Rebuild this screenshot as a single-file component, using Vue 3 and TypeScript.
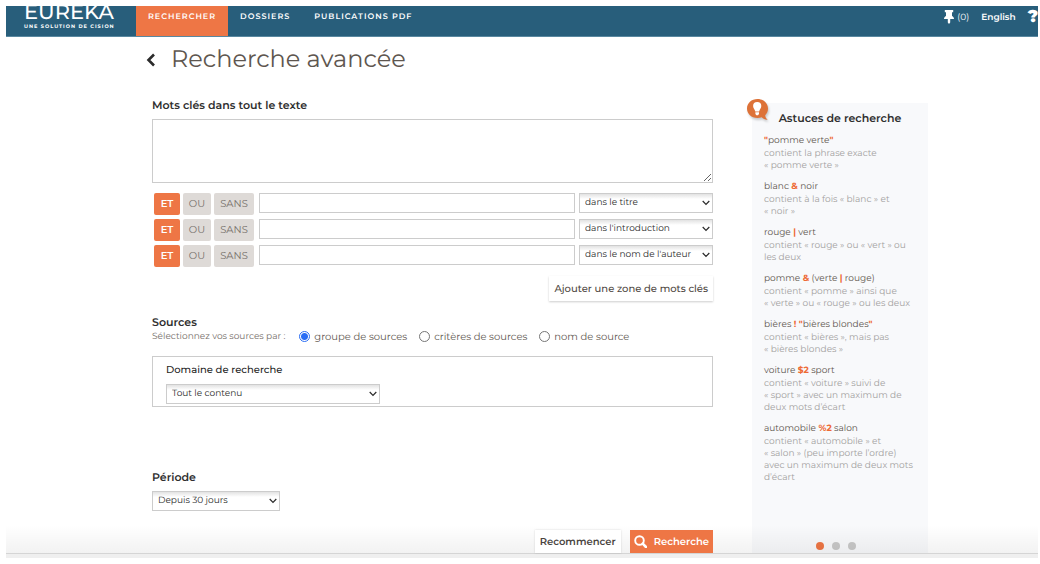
<script setup lang="ts">
import { ref } from 'vue'

type Operator = 'ET' | 'OU' | 'SANS'
interface KeywordRow { id: number; operator: Operator; text: string; field: string }
interface Part { text: string; mark?: boolean }
interface Tip { example: Part[]; lines: string[] }

const operators: Operator[] = ['ET', 'OU', 'SANS']
const fields = ['dans le titre', "dans l'introduction", "dans le nom de l'auteur"]
const rows = ref<KeywordRow[]>(
  fields.map((field, i) => ({ id: i + 1, operator: 'ET' as Operator, text: '', field }))
)
const keywords = ref('')
const sourceModes = ['groupe de sources', 'critères de sources', 'nom de source']
const sourceMode = ref(sourceModes[0])
const domain = ref('Tout le contenu')
const period = ref('Depuis 30 jours')
const tipPage = ref(1)

const tips: Tip[] = [
  { example: [{ text: '"', mark: true }, { text: 'pomme verte' }, { text: '"', mark: true }],
    lines: ['contient la phrase exacte', '« pomme verte »'] },
  { example: [{ text: 'blanc ' }, { text: '&', mark: true }, { text: ' noir' }],
    lines: ['contient à la fois « blanc » et', '« noir »'] },
  { example: [{ text: 'rouge ' }, { text: '|', mark: true }, { text: ' vert' }],
    lines: ['contient « rouge » ou « vert » ou', 'les deux'] },
  { example: [{ text: 'pomme ' }, { text: '&', mark: true }, { text: ' (verte ' }, { text: '|', mark: true }, { text: ' rouge)' }],
    lines: ['contient « pomme » ainsi que', '« verte » ou « rouge » ou les deux'] },
  { example: [{ text: 'bières ' }, { text: '! "', mark: true }, { text: 'bières blondes' }, { text: '"', mark: true }],
    lines: ['contient « bières », mais pas', '« bières blondes »'] },
  { example: [{ text: 'voiture ' }, { text: '$2', mark: true }, { text: ' sport' }],
    lines: ['contient « voiture » suivi de', '« sport » avec un maximum de', 'deux mots d’écart'] },
  { example: [{ text: 'automobile ' }, { text: '%2', mark: true }, { text: ' salon' }],
    lines: ['contient « automobile » et', '« salon » (peu importe l’ordre)', 'avec un maximum de deux mots', 'd’écart'] }
]

function addRow() {
  rows.value.push({ id: rows.value.length + 1, operator: 'ET', text: '', field: fields[0] })
}
</script>

<template>
  <div class="page">
    <header class="topbar">
      <a class="logo" href="#">
        <span class="logo-name">EUREKA</span>
        <span class="logo-tag">UNE SOLUTION DE CISION</span>
      </a>
      <nav class="nav">
        <a class="nav-item active" href="#">RECHERCHER</a>
        <a class="nav-item" href="#">DOSSIERS</a>
        <a class="nav-item" href="#">PUBLICATIONS PDF</a>
      </nav>
      <div class="tools">
        <a class="pins" href="#" aria-label="Documents épinglés">
          <svg width="10" height="14" viewBox="0 0 10 14" aria-hidden="true">
            <path d="M.8 0h8.400v2.200H8V6c1.200.5 2 1.500 2 3H6.200v3.500L5 14l-1.200-1.500V9H0c0-1.500.8-2.500 2-3V2.200H.8z" fill="#fff" />
          </svg>
          <span>(0)</span>
        </a>
        <a class="lang" href="#">English</a>
        <a class="help" href="#" aria-label="Aide">?</a>
      </div>
    </header>

    <main class="main">
      <div class="title-row">
        <a class="back" href="#" aria-label="Retour">
          <svg width="10" height="14" viewBox="0 0 10 14" aria-hidden="true">
            <path d="M8 1.500L2.500 7 8 12.500" fill="none" stroke="#2b2b2b" stroke-width="2.600" />
          </svg>
        </a>
        <h1>Recherche avancée</h1>
      </div>

      <div class="columns">
        <form class="form" @submit.prevent>
          <label class="heading" for="keywords">Mots clés dans tout le texte</label>
          <textarea id="keywords" v-model="keywords" class="keywords"></textarea>

          <div class="rows">
            <div v-for="row in rows" :key="row.id" class="row">
              <div class="ops">
                <button
                  v-for="op in operators"
                  :key="op"
                  type="button"
                  class="op"
                  :class="[op.toLowerCase(), { on: row.operator === op }]"
                  @click="row.operator = op"
                >{{ op }}</button>
              </div>
              <input v-model="row.text" class="term" type="text" :aria-label="'Mot clé ' + row.id" />
              <div class="select field">
                <select v-model="row.field" :aria-label="'Champ ' + row.id">
                  <option v-for="f in fields" :key="f">{{ f }}</option>
                </select>
                <svg class="caret" width="8" height="6" viewBox="0 0 8 6" aria-hidden="true"><path d="M.7 1L4 4.500 7.300 1" /></svg>
              </div>
            </div>
          </div>

          <button type="button" class="add" @click="addRow">Ajouter une zone de mots clés</button>

          <h2 class="heading sources">Sources</h2>
          <div class="modes" role="radiogroup" aria-label="Sélectionnez vos sources par">
            <span class="modes-label">Sélectionnez vos sources par :</span>
            <label v-for="mode in sourceModes" :key="mode" class="mode">
              <input v-model="sourceMode" type="radio" name="source-mode" :value="mode" />
              <span>{{ mode }}</span>
            </label>
          </div>

          <div class="domain">
            <label class="subheading" for="domain">Domaine de recherche</label>
            <div class="select domain-select">
              <select id="domain" v-model="domain"><option>Tout le contenu</option></select>
              <svg class="caret" width="8" height="6" viewBox="0 0 8 6" aria-hidden="true"><path d="M.7 1L4 4.500 7.300 1" /></svg>
            </div>
          </div>

          <label class="heading period" for="period">Période</label>
          <div class="select period-select">
            <select id="period" v-model="period"><option>Depuis 30 jours</option></select>
            <svg class="caret" width="8" height="6" viewBox="0 0 8 6" aria-hidden="true"><path d="M.7 1L4 4.500 7.300 1" /></svg>
          </div>

          <div class="actions">
            <button type="reset" class="reset">Recommencer</button>
            <button type="submit" class="submit">
              <svg width="13" height="13" viewBox="0 0 13 13" aria-hidden="true">
                <circle cx="5.500" cy="5.500" r="4.300" fill="none" stroke="#fff" stroke-width="1.900" />
                <path d="M8.700 8.700l3.300 3.300" stroke="#fff" stroke-width="2.600" stroke-linecap="round" />
              </svg>
              <span>Recherche</span>
            </button>
          </div>
        </form>

        <aside class="tips">
          <svg class="bulb" width="24" height="24" viewBox="0 0 24 24" aria-hidden="true">
            <path d="M11.500 1C5.400 1 1 5.200 1 10.500S5.400 20 11.500 20c1.600 0 3-.3 4.200-.8 1.500 1.700 3.500 2.700 6 2.500-1.700-1.200-2.400-2.900-2.500-4.500 1.800-1.700 2.800-4 2.800-6.700C22 5.200 17.600 1 11.500 1z" fill="#dd7238" />
            <path d="M11.200 4a4.100 4.100 0 0 0-4.100 4.100c0 2.200 1.700 3.200 2.200 5.400h3.800c.5-2.200 2.200-3.200 2.200-5.400A4.100 4.100 0 0 0 11.200 4zM9.400 14.300h3.600v1.800l-1 1.100h-1.600l-1-1.100z" fill="#fff" />
          </svg>
          <h2 class="tips-title">Astuces de recherche</h2>
          <dl>
            <div v-for="(tip, i) in tips" :key="i" class="tip">
              <dt><template v-for="(part, j) in tip.example" :key="j"><b v-if="part.mark">{{ part.text }}</b><template v-else>{{ part.text }}</template></template></dt>
              <dd><span v-for="line in tip.lines" :key="line">{{ line }}</span></dd>
            </div>
          </dl>
          <div class="dots">
            <button
              v-for="n in 3"
              :key="n"
              type="button"
              class="dot"
              :class="{ current: n === tipPage }"
              :aria-label="'Astuces, page ' + n"
              @click="tipPage = n"
            ></button>
          </div>
        </aside>
      </div>
    </main>
    <footer class="edge"></footer>
  </div>
</template>

<style>
body {
  background: #fff;
}
</style>

<style scoped>
.page,
.page * {
  box-sizing: border-box;
}

.page {
  display: flex;
  flex-direction: column;
  min-height: 100vh;
  padding: 6px 2px 6px 6px;
  font-family: Montserrat, Inter, "Open Sans", sans-serif;
  font-size: 10px;
  color: #5e564f;
  text-rendering: geometricPrecision;
}

a {
  color: inherit;
  text-decoration: none;
}

button,
input,
select,
textarea {
  font: inherit;
  margin: 0;
  text-rendering: inherit;
}

h1,
h2,
dl,
dd {
  margin: 0;
}

.topbar {
  display: flex;
  height: 31px;
  overflow: hidden;
  background: #285e7b;
  border-bottom: 1px solid #5988a0;
  color: #fff;
}

.logo {
  flex: none;
  display: flex;
  flex-direction: column;
  justify-content: flex-end;
  width: 130px;
  padding: 0 0 6px 18px;
  white-space: nowrap;
}

.logo-name {
  font-size: 21px;
  line-height: 22px;
  font-weight: 500;
}

.logo-tag {
  font-size: 5px;
  line-height: 6px;
  font-weight: 700;
  letter-spacing: 1px;
}

.nav {
  display: flex;
}

.nav-item {
  padding: 0 12px;
  font-size: 8px;
  line-height: 23px;
  font-weight: 600;
  letter-spacing: 1px;
  white-space: nowrap;
}

.nav-item.active {
  height: 31px;
  background: #ee7645;
}

.tools {
  display: flex;
  gap: 12px;
  margin-left: auto;
  line-height: 23px;
}

.pins {
  display: flex;
  gap: 3px;
}

.pins svg {
  margin-top: 4px;
}

.pins span {
  font-size: 9px;
}

.lang {
  font-size: 9px;
  font-weight: 600;
}

.help {
  font-size: 17px;
  font-weight: 900;
}

.main {
  position: relative;
  flex: 1;
  display: flex;
  flex-direction: column;
  padding: 0 110px 0 146px;
}

.main::after {
  content: "";
  position: absolute;
  inset: auto 0 0;
  height: 28px;
  background: linear-gradient(rgba(0, 0, 0, 0), rgba(0, 0, 0, 0.05));
  pointer-events: none;
}

.title-row {
  display: flex;
  align-items: center;
  height: 46px;
}

.back {
  display: flex;
  width: 20px;
  margin-left: -6px;
}

.title-row h1 {
  margin-left: 5px;
  font-size: 24px;
  line-height: 30px;
  font-weight: 400;
}

.columns {
  flex: 1;
  display: flex;
  gap: 39px;
}

.form {
  flex: 1;
  min-width: 0;
  display: flex;
  flex-direction: column;
  padding-top: 12px;
}

.heading {
  font-size: 11px;
  line-height: 20px;
  font-weight: 600;
  color: #2f2f2f;
}

.keywords {
  height: 64px;
  margin-top: 4px;
  border: 1px solid #ccc;
  background: #fff;
  resize: vertical;
}

.rows {
  display: flex;
  flex-direction: column;
  gap: 4px;
  margin-top: 10px;
}

.row {
  display: flex;
  align-items: flex-start;
  height: 22px;
}

.ops {
  display: flex;
  gap: 3px;
  margin: 0 5px 0 2px;
}

.op {
  height: 22px;
  padding: 0 0 2px;
  border: 0;
  border-radius: 2px;
  background: #dedad7;
  color: #77706b;
}

.op.et {
  width: 26px;
}

.op.ou {
  width: 28px;
}

.op.sans {
  width: 40px;
}

.op.on {
  background: #ee7645;
  color: #fff;
  font-weight: 600;
}

.term {
  flex: 1;
  min-width: 0;
  height: 20px;
  border: 1px solid #ccc;
  background: #fff;
}

.select {
  position: relative;
  height: 20px;
}

.select select {
  appearance: none;
  width: 100%;
  height: 100%;
  padding: 0 20px 2px 5px;
  border: 1px solid #ccc;
  border-radius: 0;
  background: linear-gradient(#e2e2e2, #fff 5px);
  font-size: 9px;
  color: #2b2b2b;
}

.caret {
  position: absolute;
  right: 3px;
  top: 7px;
  pointer-events: none;
}

.caret path {
  fill: none;
  stroke: #2b2b2b;
  stroke-width: 1.2;
}

.field {
  width: 134px;
  margin-left: 4px;
}

.add {
  align-self: flex-end;
  height: 25px;
  margin-top: 9px;
  padding: 0 5px;
  border: 0;
  background: #fff;
  box-shadow: 0 1px 2px rgba(0, 0, 0, 0.2);
  font-weight: 500;
  color: #4f4842;
}

.sources {
  margin-top: 12px;
  line-height: 18px;
}

.modes {
  display: flex;
  align-items: center;
  gap: 12px;
  height: 10px;
  white-space: nowrap;
}

.modes-label {
  margin-right: 2px;
  font-size: 9px;
  color: #77706b;
}

.mode {
  display: flex;
  align-items: center;
  gap: 4px;
}

.mode input {
  appearance: none;
  width: 11px;
  height: 11px;
  border: 1px solid #767676;
  border-radius: 50%;
  background: #fff;
}

.mode input:checked {
  border-color: #2a6df4;
  background: radial-gradient(#2a6df4 3px, #fff 4px);
}

.domain {
  height: 51px;
  margin-top: 15px;
  padding: 5px 13px;
  border: 1px solid #ccc;
}

.subheading {
  display: block;
  line-height: 16px;
  font-weight: 500;
  color: #1f1f1f;
}

.domain-select {
  width: 214px;
  margin-top: 6px;
}

.period {
  margin-top: 60px;
}

.period-select {
  width: 128px;
  margin-top: 4px;
}

.actions {
  display: flex;
  justify-content: flex-end;
  gap: 9px;
  margin-top: auto;
}

.actions button {
  position: relative;
  z-index: 1;
  height: 23px;
  border: 0;
  font-weight: 600;
}

.reset {
  padding: 0 5px;
  background: #fff;
  box-shadow: 0 0 2px rgba(0, 0, 0, 0.15);
  color: #4a443f;
}

.submit {
  display: flex;
  align-items: center;
  gap: 7px;
  padding: 0 4px;
  background: #ee7645;
  color: #fff;
}

.tips {
  position: relative;
  flex: none;
  display: flex;
  flex-direction: column;
  width: 176px;
  margin-top: 20px;
  padding: 5px 12px 3px;
  background: #f8f9fb;
}

.bulb {
  position: absolute;
  left: -6px;
  top: -5px;
  filter: drop-shadow(1px 2px 1px rgba(0, 0, 0, 0.2));
}

.tips-title {
  margin-bottom: 6px;
  font-size: 11px;
  line-height: 20px;
  font-weight: 600;
  text-align: center;
  color: #2f2f2f;
}

.tip {
  margin-bottom: 8px;
  font-size: 9px;
  white-space: nowrap;
}

.tip dt {
  line-height: 13px;
}

.tip b {
  font-weight: 700;
  color: #ee6a35;
}

.tip dd {
  padding-top: 1px;
  line-height: 12px;
  color: #a3a19f;
}

.tip dd span {
  display: block;
}

.dots {
  display: flex;
  justify-content: center;
  gap: 8px;
  margin-top: auto;
  padding-right: 8px;
}

.dot {
  width: 8px;
  height: 8px;
  padding: 0;
  border: 0;
  border-radius: 50%;
  background: #c8c8c8;
}

.dot.current {
  background: #ee7645;
}

.edge {
  height: 5px;
  border-top: 1px solid #d5d5d5;
  background: #efefef;
}
</style>
